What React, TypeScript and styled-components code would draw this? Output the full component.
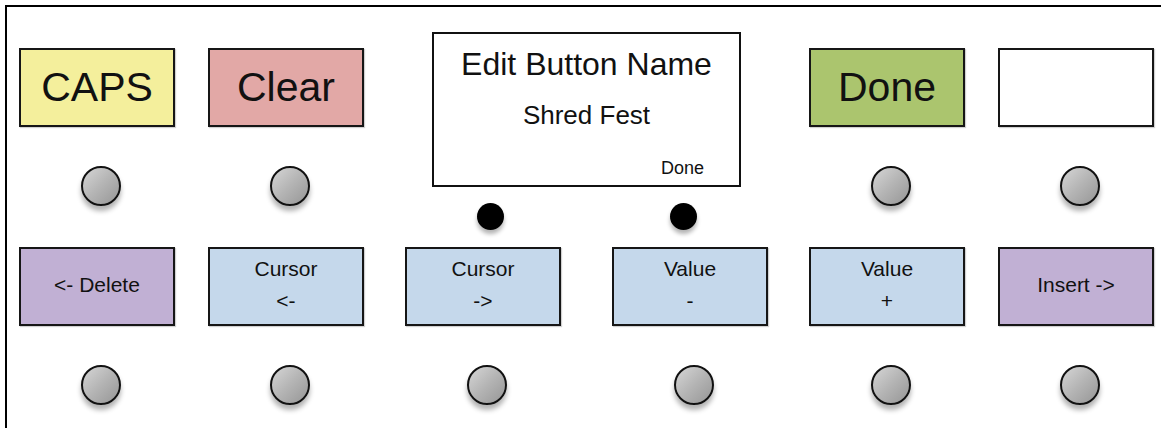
import React from 'react';
import styled, { createGlobalStyle } from 'styled-components';

const GlobalStyle = createGlobalStyle`
  html, body {
    margin: 0;
    padding: 0;
    background: #ffffff;
    overflow: hidden;
  }
  body {
    font-family: "Liberation Sans", Arial, Helvetica, sans-serif;
    color: #111111;
  }
`;

const TRACKS = '156px 33px 156px 41px 156px 51px 156px 41px 156px 33px 156px';

const Frame = styled.div`
  margin: 5px 0 0 5px;
  width: 1156px;
  height: 440px;
  box-sizing: border-box;
  border-top: 2px solid #000;
  border-left: 2px solid #000;
  padding: 25px 0 0 12px;
`;

const Row = styled.div<{ $gapTop?: number }>`
  display: grid;
  grid-template-columns: ${TRACKS};
  align-items: start;
  margin-top: ${(p) => p.$gapTop ?? 0}px;
`;

const Slot = styled.div<{ $col: string; $offset?: number }>`
  grid-column: ${(p) => p.$col};
  display: flex;
  flex-direction: column;
  align-items: center;
  padding-top: ${(p) => p.$offset ?? 0}px;
`;

const Key = styled.div<{ $bg: string; $size: number; $h: number }>`
  box-sizing: border-box;
  width: 156px;
  height: ${(p) => p.$h}px;
  background: ${(p) => p.$bg};
  border: 2px solid #161616;
  box-shadow: 1px 1px 1px rgba(0, 0, 0, 0.18);
  display: flex;
  flex-direction: column;
  align-items: center;
  justify-content: center;
  font-size: ${(p) => p.$size}px;
  line-height: ${(p) => (p.$size > 30 ? 46 : 32)}px;
  padding-bottom: ${(p) => (p.$size > 30 ? 1 : 4)}px;
  white-space: nowrap;
`;

const Knob = styled.div`
  box-sizing: border-box;
  width: 40px;
  height: 40px;
  margin-top: 39px;
  margin-left: 8px;
  border-radius: 50%;
  border: 2px solid #111;
  background: linear-gradient(135deg, #d6d6d6 0%, #b4b4b4 50%, #969696 100%);
  box-shadow: 0 5px 5px rgba(0, 0, 0, 0.3);
`;

const Screen = styled.div`
  box-sizing: border-box;
  width: 309px;
  height: 155px;
  border: 2px solid #111;
  background: #fff;
  display: flex;
  flex-direction: column;
  align-items: center;
`;

const ScreenTitle = styled.div`
  font-size: 32px;
  line-height: 36px;
  margin-top: 12px;
`;

const ScreenValue = styled.div`
  font-size: 26px;
  line-height: 30px;
  margin-top: 18px;
`;

const ScreenHint = styled.div`
  align-self: flex-end;
  font-size: 18px;
  line-height: 20px;
  margin-top: 28px;
  margin-right: 35px;
`;

const Dots = styled.div`
  display: flex;
  gap: 166px;
  margin-top: 16px;
`;

const Dot = styled.div`
  width: 27px;
  height: 27px;
  border-radius: 50%;
  background: #000;
  box-shadow: 0 4px 4px rgba(0, 0, 0, 0.3);
`;

const COLORS = {
  yellow: '#f4ef9c',
  pink: '#e2a8a6',
  green: '#abc56e',
  white: '#ffffff',
  purple: '#c1b0d4',
  blue: '#c5d8eb',
};

type KeyDef = { col: string; bg: string; lines: string[] };

const topKeys: KeyDef[] = [
  { col: '1', bg: COLORS.yellow, lines: ['CAPS'] },
  { col: '3', bg: COLORS.pink, lines: ['Clear'] },
  { col: '9', bg: COLORS.green, lines: ['Done'] },
  { col: '11', bg: COLORS.white, lines: [] },
];

const bottomKeys: KeyDef[] = [
  { col: '1', bg: COLORS.purple, lines: ['<- Delete'] },
  { col: '3', bg: COLORS.blue, lines: ['Cursor', '<-'] },
  { col: '5', bg: COLORS.blue, lines: ['Cursor', '->'] },
  { col: '7', bg: COLORS.blue, lines: ['Value', '-'] },
  { col: '9', bg: COLORS.blue, lines: ['Value', '+'] },
  { col: '11', bg: COLORS.purple, lines: ['Insert ->'] },
];

function TopKey({ k }: { k: KeyDef }) {
  return (
    <Slot $col={k.col} $offset={16}>
      <Key $bg={k.bg} $size={41} $h={79}>
        {k.lines.map((l) => (
          <span key={l}>{l}</span>
        ))}
      </Key>
      <Knob />
    </Slot>
  );
}

export default function App() {
  return (
    <>
      <GlobalStyle />
      <Frame>
        <Row>
          {topKeys.slice(0, 2).map((k) => (
            <TopKey key={k.col} k={k} />
          ))}
          <Slot $col="5 / 8">
            <Screen>
              <ScreenTitle>Edit Button Name</ScreenTitle>
              <ScreenValue>Shred Fest</ScreenValue>
              <ScreenHint>Done</ScreenHint>
            </Screen>
            <Dots>
              <Dot />
              <Dot />
            </Dots>
          </Slot>
          {topKeys.slice(2).map((k) => (
            <TopKey key={k.col} k={k} />
          ))}
        </Row>
        <Row $gapTop={17}>
          {bottomKeys.map((k) => (
            <Slot key={k.col} $col={k.col}>
              <Key $bg={k.bg} $size={21} $h={79}>
                {k.lines.map((l) => (
                  <span key={l}>{l}</span>
                ))}
              </Key>
              <Knob />
            </Slot>
          ))}
        </Row>
      </Frame>
    </>
  );
}
